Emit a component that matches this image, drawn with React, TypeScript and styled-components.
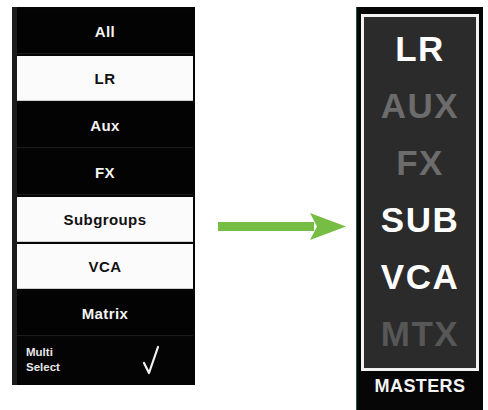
import React from 'react';
import styled, { createGlobalStyle } from 'styled-components';

const GlobalStyle = createGlobalStyle`
    html, body {
        margin: 0;
        padding: 0;
        background: #fff;
        font-family: "Liberation Sans", Arial, sans-serif;
    }
`;

const Page = styled.div`
    width: 488px;
    height: 410px;
    display: grid;
    grid-template-columns: 183px 161px 127px;
    align-items: start;
    padding: 7px 0 0 12px;
    box-sizing: border-box;
    overflow: hidden;
`;

const FilterPanel = styled.div`
    height: 378px;
    background: #050505;
    border-left: 5px solid #1c1c1c;
    padding: 2px 2px 0 0;
    box-sizing: border-box;
    display: grid;
    grid-template-rows: repeat(7, 45px) 1fr;
    row-gap: 2px;
`;

const FilterRow = styled.div<{ $active?: boolean }>`
    display: flex;
    align-items: center;
    justify-content: center;
    background: ${(p) => (p.$active ? '#fbfbfb' : '#030303')};
    color: ${(p) => (p.$active ? '#111' : '#f4f4f4')};
    border-bottom: 1px solid ${(p) => (p.$active ? '#cfcfcf' : '#1b1b1b')};
    font-size: 15px;
    font-weight: 700;
    letter-spacing: 0.4px;
`;

const MultiRow = styled.div`
    display: flex;
    align-items: center;
    justify-content: space-between;
    padding: 0 33px 4px 9px;
    background: #040404;
    color: #e8e8e8;
`;

const MultiLabel = styled.div`
    font-size: 11.5px;
    font-weight: 700;
    line-height: 15px;
`;

const ArrowCell = styled.div`
    display: flex;
    align-items: center;
    padding-left: 23px;
    height: 28px;
    margin-top: 206px;
`;

const MastersFrame = styled.div`
    height: 403px;
    background: #060606;
    border-left: 1px solid #1e5a46;
    padding: 7px 4px 0 4px;
    box-sizing: border-box;
    display: flex;
    flex-direction: column;
`;

const MastersInner = styled.div`
    height: 357px;
    box-sizing: border-box;
    border: 3px solid #f2f2f2;
    background: #2b2b2b;
    padding-top: 3px;
    display: grid;
    grid-template-rows: repeat(6, 57px);
`;

const MasterItem = styled.div<{ $tone: 'on' | 'off' | 'dim' }>`
    display: flex;
    align-items: center;
    justify-content: center;
    font-size: 35px;
    font-weight: 700;
    letter-spacing: 1.5px;
    color: ${(p) =>
        p.$tone === 'on' ? '#ffffff' : p.$tone === 'off' ? '#6c6c6c' : '#575757'};
`;

const MastersLabel = styled.div`
    text-align: center;
    color: #f4f4f4;
    font-size: 18px;
    font-weight: 700;
    letter-spacing: 0.4px;
    padding-top: 5px;
`;

const filters = [
    { label: 'All', active: false },
    { label: 'LR', active: true },
    { label: 'Aux', active: false },
    { label: 'FX', active: false },
    { label: 'Subgroups', active: true },
    { label: 'VCA', active: true },
    { label: 'Matrix', active: false },
];

const masters: { label: string; tone: 'on' | 'off' | 'dim' }[] = [
    { label: 'LR', tone: 'on' },
    { label: 'AUX', tone: 'off' },
    { label: 'FX', tone: 'off' },
    { label: 'SUB', tone: 'on' },
    { label: 'VCA', tone: 'on' },
    { label: 'MTX', tone: 'dim' },
];

export default function App() {
    return (
        <>
            <GlobalStyle />
            <Page>
                <FilterPanel>
                    {filters.map((f) => (
                        <FilterRow key={f.label} $active={f.active}>
                            {f.label}
                        </FilterRow>
                    ))}
                    <MultiRow>
                        <MultiLabel>
                            Multi
                            <br />
                            Select
                        </MultiLabel>
                        <svg width="18" height="30" viewBox="0 0 18 30">
                            <path
                                d="M2 18 L7 28 L16 2"
                                fill="none"
                                stroke="#f2f2f2"
                                strokeWidth="2.2"
                                strokeLinecap="round"
                                strokeLinejoin="round"
                            />
                        </svg>
                    </MultiRow>
                </FilterPanel>
                <ArrowCell>
                    <svg width="130" height="28" viewBox="0 0 130 28">
                        <rect x="0" y="9" width="96" height="9" fill="#76bd43" />
                        <path d="M92 0 L128 13.5 L92 27 L99 13.5 Z" fill="#76bd43" />
                    </svg>
                </ArrowCell>
                <MastersFrame>
                    <MastersInner>
                        {masters.map((m) => (
                            <MasterItem key={m.label} $tone={m.tone}>
                                {m.label}
                            </MasterItem>
                        ))}
                    </MastersInner>
                    <MastersLabel>MASTERS</MastersLabel>
                </MastersFrame>
            </Page>
        </>
    );
}
